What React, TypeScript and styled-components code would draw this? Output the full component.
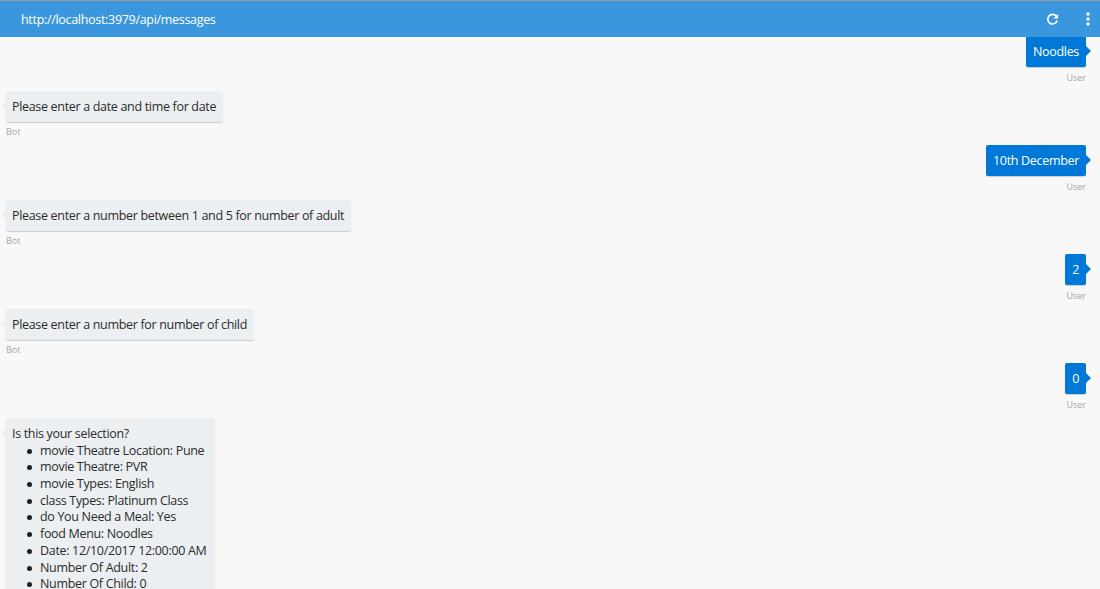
import styled, { createGlobalStyle } from 'styled-components'

const GlobalStyle = createGlobalStyle`
  html, body {
    margin: 0;
    height: 100%;
    overflow: hidden;
    background: #f8f8f8;
    font-family: "Open Sans", "Noto Sans", "Liberation Sans", sans-serif;
  }
`

const Page = styled.div`
  width: 1100px;
  height: 589px;
  display: flex;
  flex-direction: column;
  overflow: hidden;
`

const Header = styled.header`
  position: relative;
  z-index: 1;
  flex: none;
  height: 36px;
  display: flex;
  align-items: center;
  justify-content: space-between;
  background: #3a96dd;
  border-top: 1px solid #9a9a94;
  color: #fff;
  padding: 0 9px 0 21px;
`

const Address = styled.span`
  font-size: 12.5px;
  letter-spacing: -0.31px;
`

const Actions = styled.div`
  display: flex;
  align-items: center;
  gap: 26px;
`

const Messages = styled.main`
  flex: 1;
  min-height: 0;
  margin-top: -0.6px;
  overflow: hidden;
  display: flex;
  flex-direction: column;
`

const Group = styled.section<{ $from: 'bot' | 'user' }>`
  flex: none;
  height: 54.5px;
  box-sizing: border-box;
  display: flex;
  flex-direction: column;
  align-items: ${(p) => (p.$from === 'user' ? 'flex-end' : 'flex-start')};
  padding: 0 14px 0 6px;
`

const Bubble = styled.div<{ $from: 'bot' | 'user' }>`
  position: relative;
  box-sizing: border-box;
  min-height: 30px;
  padding: 8px 7px 6px ${(p) => (p.$from === 'user' ? '7px' : '6px')};
  font-size: 12.5px;
  line-height: 16.7px;
  letter-spacing: -0.32px;
  border-radius: 2px;
  color: ${(p) => (p.$from === 'user' ? '#fff' : '#2b2b2b')};
  background: ${(p) => (p.$from === 'user' ? '#0078d7' : '#eceff1')};
  box-shadow: 0 1px 1px rgba(0, 0, 0, 0.18);

  &::after {
    content: '';
    position: absolute;
    top: 10px;
    border: 5px solid transparent;
    ${(p) =>
      p.$from === 'user'
        ? 'left: 100%; border-left-color: #0078d7; border-right-width: 0;'
        : 'right: 100%; border-right-color: #eceff1; border-left-width: 0;'}
  }
`

const Sender = styled.div<{ $from: 'bot' | 'user' }>`
  margin-top: ${(p) => (p.$from === 'user' ? '5px' : '4px')};
  font-size: 9px;
  line-height: 12px;
  color: #a6a6a6;
`

const Summary = styled.ul`
  margin: 0;
  padding: 0 1px 0 28px;
  list-style: none;
`

const SummaryItem = styled.li`
  position: relative;

  &::before {
    content: '';
    position: absolute;
    left: -13.5px;
    top: 6px;
    width: 5px;
    height: 5px;
    border-radius: 50%;
    background: #1f1f1f;
  }
`

const SummaryGroup = styled(Group)`
  height: auto;
`

const conversation: { from: 'bot' | 'user'; text: string }[] = [
  { from: 'user', text: 'Noodles' },
  { from: 'bot', text: 'Please enter a date and time for date' },
  { from: 'user', text: '10th December' },
  { from: 'bot', text: 'Please enter a number between 1 and 5 for number of adult' },
  { from: 'user', text: '2' },
  { from: 'bot', text: 'Please enter a number for number of child' },
  { from: 'user', text: '0' },
]

const selection = [
  'movie Theatre Location: Pune',
  'movie Theatre: PVR',
  'movie Types: English',
  'class Types: Platinum Class',
  'do You Need a Meal: Yes',
  'food Menu: Noodles',
  'Date: 12/10/2017 12:00:00 AM',
  'Number Of Adult: 2',
  'Number Of Child: 0',
]

const RefreshIcon = () => (
  <svg width="13" height="13" viewBox="0 0 13 13" fill="none">
    <path d="M10.2 3A4.8 4.8 0 1 0 11.2 7.6" stroke="#fff" strokeWidth="1.6" />
    <path d="M12 0.8V5.4H7.4Z" fill="#fff" />
  </svg>
)

const MoreIcon = () => (
  <svg width="6" height="14" viewBox="0 0 6 14" fill="#fff">
    <circle cx="3" cy="2" r="1.7" />
    <circle cx="3" cy="7" r="1.7" />
    <circle cx="3" cy="12" r="1.7" />
  </svg>
)

export default function App() {
  return (
    <Page>
      <GlobalStyle />
      <Header>
        <Address>http://localhost:3979/api/messages</Address>
        <Actions>
          <RefreshIcon />
          <MoreIcon />
        </Actions>
      </Header>
      <Messages>
        {conversation.map((m) => (
          <Group key={m.text} $from={m.from}>
            <Bubble $from={m.from}>{m.text}</Bubble>
            <Sender $from={m.from}>{m.from === 'user' ? 'User' : 'Bot'}</Sender>
          </Group>
        ))}
        <SummaryGroup $from="bot">
          <Bubble $from="bot">
            Is this your selection?
            <Summary>
              {selection.map((s) => (
                <SummaryItem key={s}>{s}</SummaryItem>
              ))}
            </Summary>
          </Bubble>
        </SummaryGroup>
      </Messages>
    </Page>
  )
}
